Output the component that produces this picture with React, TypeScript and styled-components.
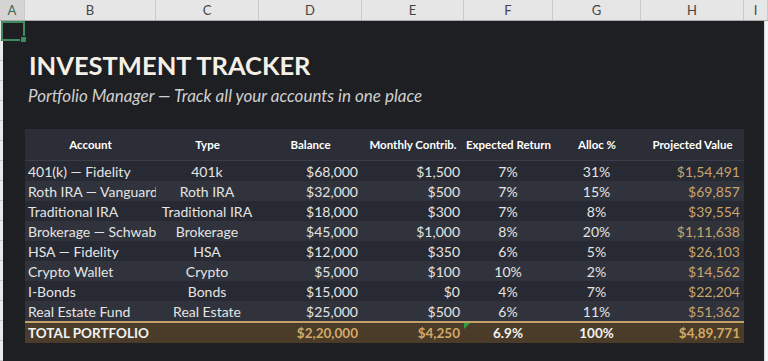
import styled, { createGlobalStyle } from "styled-components";

const GlobalStyle = createGlobalStyle`
    html, body {
        margin: 0;
        padding: 0;
        background: #ffffff;
        overflow: hidden;
    }
    * {
        box-sizing: border-box;
    }
`

const columnLetters = [
    {letter: "A", width: 25},
    {letter: "B", width: 131},
    {letter: "C", width: 103},
    {letter: "D", width: 103},
    {letter: "E", width: 102},
    {letter: "F", width: 89},
    {letter: "G", width: 88},
    {letter: "H", width: 103},
    {letter: "I", width: 24},
]

const tableColumns = "131px 103px 103px 102px 89px 88px 103px"

const headers = ["Account", "Type", "Balance", "Monthly Contrib.", "Expected Return", "Alloc %", "Projected Value"]

const accounts = [
    ["401(k) — Fidelity", "401k", "$68,000", "$1,500", "7%", "31%", "$1,54,491"],
    ["Roth IRA — Vanguard", "Roth IRA", "$32,000", "$500", "7%", "15%", "$69,857"],
    ["Traditional IRA", "Traditional IRA", "$18,000", "$300", "7%", "8%", "$39,554"],
    ["Brokerage — Schwab", "Brokerage", "$45,000", "$1,000", "8%", "20%", "$1,11,638"],
    ["HSA — Fidelity", "HSA", "$12,000", "$350", "6%", "5%", "$26,103"],
    ["Crypto Wallet", "Crypto", "$5,000", "$100", "10%", "2%", "$14,562"],
    ["I-Bonds", "Bonds", "$15,000", "$0", "4%", "7%", "$22,204"],
    ["Real Estate Fund", "Real Estate", "$25,000", "$500", "6%", "11%", "$51,362"],
]

// alignment per column: account left, type centered, money right, percents centered
const aligns: Array<"left" | "center" | "right"> = ["left", "center", "right", "right", "center", "center", "right"]

export default function App() {
    return (
        <Page>
            <GlobalStyle/>
            <ColumnBar>
                {columnLetters.map(col => (
                    <ColumnLetter key={col.letter} $width={col.width} $selected={col.letter === "A"}>
                        {col.letter}
                    </ColumnLetter>
                ))}
            </ColumnBar>
            <SheetArea>
                <RowGutter/>
                <Canvas>
                    <SelectedCell/>
                    <BlankRow/>
                    <Title>INVESTMENT TRACKER</Title>
                    <Subtitle>Portfolio Manager — Track all your accounts in one place</Subtitle>
                    <Table>
                        <HeaderRow>
                            {headers.map(h => <HeaderCell key={h}>{h}</HeaderCell>)}
                        </HeaderRow>
                        {accounts.map((row, index) => (
                            <DataRow key={row[0]} $even={index % 2 === 1}>
                                {row.map((value, i) => (
                                    <Cell key={i} $align={aligns[i]} $gold={i === 6}>{value}</Cell>
                                ))}
                            </DataRow>
                        ))}
                        <TotalRow>
                            <TotalCell $align="left">TOTAL PORTFOLIO</TotalCell>
                            <TotalCell $align="center"></TotalCell>
                            <TotalCell $align="right" $gold>$2,20,000</TotalCell>
                            <TotalCell $align="right" $gold>$4,250</TotalCell>
                            <TotalCell $align="center" $flagged>6.9%</TotalCell>
                            <TotalCell $align="center">100%</TotalCell>
                            <TotalCell $align="right" $gold>$4,89,771</TotalCell>
                        </TotalRow>
                    </Table>
                </Canvas>
                <RightEdge/>
            </SheetArea>
        </Page>
    )
}

const Page = styled.div`
    width: 768px;
    height: 361px;
    display: flex;
    flex-direction: column;
    background: #ffffff;
    font-family: Lato, "Open Sans", sans-serif;
`
const ColumnBar = styled.div`
    display: flex;
    height: 21px;
    background: #e6e6e6;
    border-bottom: 1px solid #a9a9a9;
    flex-shrink: 0;
`
type letterProps = {
    $width: number
    $selected?: boolean
}
const ColumnLetter = styled.div<letterProps>`
    width: ${props => props.$width}px;
    display: flex;
    align-items: center;
    justify-content: center;
    font-size: 13px;
    color: ${props => props.$selected ? "#3f6a52" : "#444444"};
    background: ${props => props.$selected ? "#d4d4d4" : "transparent"};
    border-right: 1px solid #cacaca;
    flex-shrink: 0;
`
const SheetArea = styled.div`
    flex: 1;
    display: flex;
`
const RowGutter = styled.div`
    width: 3px;
    background: repeating-linear-gradient(to bottom, #e9e9e9 0, #e9e9e9 19px, #c9c9c9 19px, #c9c9c9 20px);
`
const RightEdge = styled.div`
    flex: 1;
    background: #f2f2f2;
    border-left: 1px solid #d6d6d6;
`
const Canvas = styled.div`
    position: relative;
    width: 761px;
    background: #1e1f22;
    padding-left: 22px;
    display: flex;
    flex-direction: column;
`
const SelectedCell = styled.div`
    position: absolute;
    left: -2px;
    top: 0;
    width: 24px;
    height: 20px;
    border: 2px solid #3f8a5f;

    &::after {
        content: "";
        position: absolute;
        right: -4px;
        bottom: -4px;
        width: 5px;
        height: 5px;
        background: #3f8a5f;
        border: 1px solid #1e1f22;
    }
`
const BlankRow = styled.div`
    height: 20px;
`
const Title = styled.h1`
    margin: 8px 0 0 4px;
    font-size: 25.5px;
    line-height: 32px;
    font-weight: 700;
    color: #f5f0e6;
`
const Subtitle = styled.div`
    margin: 5px 0 0 3px;
    font-size: 17px;
    line-height: 20px;
    font-style: italic;
    color: #cfcfcf;
`
const Table = styled.div`
    margin-top: 23px;
    width: 719px;
    display: flex;
    flex-direction: column;
`
const HeaderRow = styled.div`
    display: grid;
    grid-template-columns: ${tableColumns};
    height: 32px;
    background: #2b2e36;
    border-bottom: 1px solid #3b3e48;
`
const HeaderCell = styled.div`
    display: flex;
    align-items: center;
    justify-content: center;
    font-size: 11.5px;
    font-weight: 700;
    color: #ffffff;
    white-space: nowrap;
`
type rowProps = {
    $even: boolean
}
const DataRow = styled.div<rowProps>`
    display: grid;
    grid-template-columns: ${tableColumns};
    height: 20px;
    background: ${props => props.$even ? "#30333c" : "#272a32"};
`
type cellProps = {
    $align: "left" | "center" | "right"
    $gold?: boolean
    $flagged?: boolean
}
const Cell = styled.div<cellProps>`
    display: flex;
    align-items: center;
    justify-content: ${props => props.$align === "left" ? "flex-start" : props.$align === "right" ? "flex-end" : "center"};
    padding: 0 4px 0 3px;
    font-size: 14px;
    color: ${props => props.$gold ? "#c9a46c" : "#e4e4e4"};
    white-space: nowrap;
    overflow: hidden;
`
const TotalRow = styled.div`
    display: grid;
    grid-template-columns: ${tableColumns};
    height: 22px;
    background: #4a3c29;
    border-top: 2px solid #c4a06a;
`
const TotalCell = styled(Cell)`
    position: relative;
    overflow: visible;
    font-size: 13.5px;
    font-weight: 700;
    color: ${props => props.$gold ? "#d3a866" : "#f2f2f2"};

    &::before {
        content: "";
        display: ${props => props.$flagged ? "block" : "none"};
        position: absolute;
        left: 0;
        top: 0;
        border-top: 6px solid #2ea043;
        border-right: 6px solid transparent;
    }
`
